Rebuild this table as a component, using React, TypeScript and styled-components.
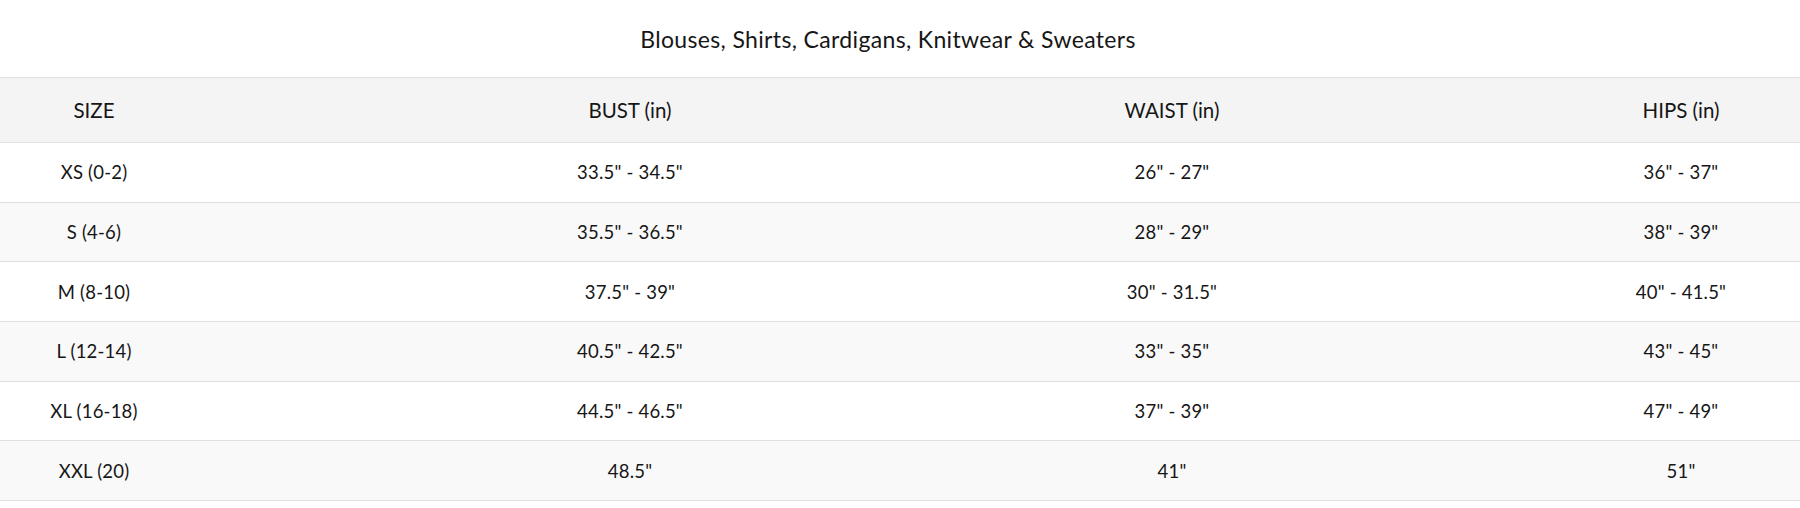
import styled, { createGlobalStyle } from "styled-components";

const GlobalStyle = createGlobalStyle`
  html, body {
    margin: 0;
    padding: 0;
    background: #fff;
  }
  body {
    font-family: Lato, "Noto Sans", Arial, sans-serif;
    color: #161616;
  }
`;

const Page = styled.div`
  width: 1800px;
  overflow: hidden;
`;

const Title = styled.h2`
  margin: 0;
  width: 1776px;
  height: 77px;
  display: flex;
  align-items: center;
  justify-content: center;
  font-size: 23px;
  font-weight: 400;
  letter-spacing: 0.35px;
`;

const Table = styled.table`
  width: 2090px;
  table-layout: fixed;
  border-collapse: collapse;
  font-size: 18.5px;
`;

const HeadRow = styled.tr`
  background: #f4f4f4;
  border-top: 1px solid #e0e0e0;
  border-bottom: 1px solid #e0e0e0;
`;

const HeadCell = styled.th`
  height: 64px;
  padding: 0;
  font-size: 20.5px;
  font-weight: 400;
  text-align: center;
`;

const Row = styled.tr<{ $striped?: boolean }>`
  background: ${(props) => (props.$striped ? "#f9f9f9" : "#fff")};
  border-bottom: 1px solid #e0e0e0;
`;

const Cell = styled.td`
  height: 58.7px;
  padding: 0;
  text-align: center;
  letter-spacing: 0.2px;
`;

const columns = [188, 884, 200, 818];
const headers = ["SIZE", "BUST (in)", "WAIST (in)", "HIPS (in)"];

const rows = [
  ["XS (0-2)", '33.5" - 34.5"', '26" - 27"', '36" - 37"'],
  ["S (4-6)", '35.5" - 36.5"', '28" - 29"', '38" - 39"'],
  ["M (8-10)", '37.5" - 39"', '30" - 31.5"', '40" - 41.5"'],
  ["L (12-14)", '40.5" - 42.5"', '33" - 35"', '43" - 45"'],
  ["XL (16-18)", '44.5" - 46.5"', '37" - 39"', '47" - 49"'],
  ["XXL (20)", '48.5"', '41"', '51"'],
];

const App = () => {
  return (
    <Page>
      <GlobalStyle />
      <Title>Blouses, Shirts, Cardigans, Knitwear &amp; Sweaters</Title>
      <Table>
        <colgroup>
          {columns.map((w, i) => (
            <col key={i} style={{ width: w }} />
          ))}
        </colgroup>
        <thead>
          <HeadRow>
            {headers.map((h) => (
              <HeadCell key={h}>{h}</HeadCell>
            ))}
          </HeadRow>
        </thead>
        <tbody>
          {rows.map((row, i) => (
            <Row key={row[0]} $striped={i % 2 === 1}>
              {row.map((value, j) => (
                <Cell key={j}>{value}</Cell>
              ))}
            </Row>
          ))}
        </tbody>
      </Table>
    </Page>
  );
};

export default App;
